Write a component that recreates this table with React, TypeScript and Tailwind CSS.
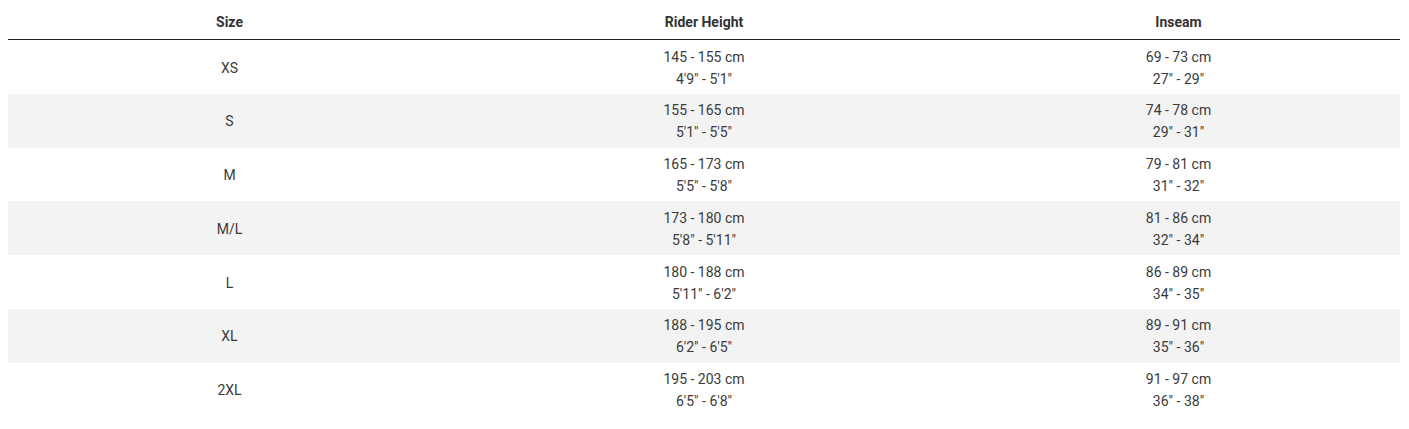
const rows = [
  { size: 'XS', cm: '145 - 155 cm', ft: '4\'9" - 5\'1"', inCm: '69 - 73 cm', inIn: '27" - 29"' },
  { size: 'S', cm: '155 - 165 cm', ft: '5\'1" - 5\'5"', inCm: '74 - 78 cm', inIn: '29" - 31"' },
  { size: 'M', cm: '165 - 173 cm', ft: '5\'5" - 5\'8"', inCm: '79 - 81 cm', inIn: '31" - 32"' },
  { size: 'M/L', cm: '173 - 180 cm', ft: '5\'8" - 5\'11"', inCm: '81 - 86 cm', inIn: '32" - 34"' },
  { size: 'L', cm: '180 - 188 cm', ft: '5\'11" - 6\'2"', inCm: '86 - 89 cm', inIn: '34" - 35"' },
  { size: 'XL', cm: '188 - 195 cm', ft: '6\'2" - 6\'5"', inCm: '89 - 91 cm', inIn: '35" - 36"' },
  { size: '2XL', cm: '195 - 203 cm', ft: '6\'5" - 6\'8"', inCm: '91 - 97 cm', inIn: '36" - 38"' },
]

export default function App() {
  return (
    <div className="bg-white px-2 font-['Roboto','Liberation_Sans',sans-serif] text-[14px] leading-[22px] text-[#3a3a3a]">
      <table className="w-[1392px] table-fixed border-collapse text-center">
        <colgroup>
          <col className="w-[443px]" />
          <col className="w-[506px]" />
          <col className="w-[443px]" />
        </colgroup>
        <thead>
          <tr className="border-b border-[#222]">
            <th className="pt-[11px] pb-[6px] font-bold text-[#333]">Size</th>
            <th className="pt-[11px] pb-[6px] font-bold text-[#333]">Rider Height</th>
            <th className="pt-[11px] pb-[6px] font-bold text-[#333]">Inseam</th>
          </tr>
        </thead>
        <tbody>
          {rows.map((r, i) => (
            <tr key={r.size} className={i % 2 === 1 ? 'bg-[#f3f3f3]' : 'bg-white'}>
              <td className="pt-[5.5px] pb-[4.3px]">{r.size}</td>
              <td className="pt-[5.5px] pb-[4.3px]">
                <div>{r.cm}</div>
                <div>{r.ft}</div>
              </td>
              <td className="pt-[5.5px] pb-[4.3px]">
                <div>{r.inCm}</div>
                <div>{r.inIn}</div>
              </td>
            </tr>
          ))}
        </tbody>
      </table>
    </div>
  )
}
